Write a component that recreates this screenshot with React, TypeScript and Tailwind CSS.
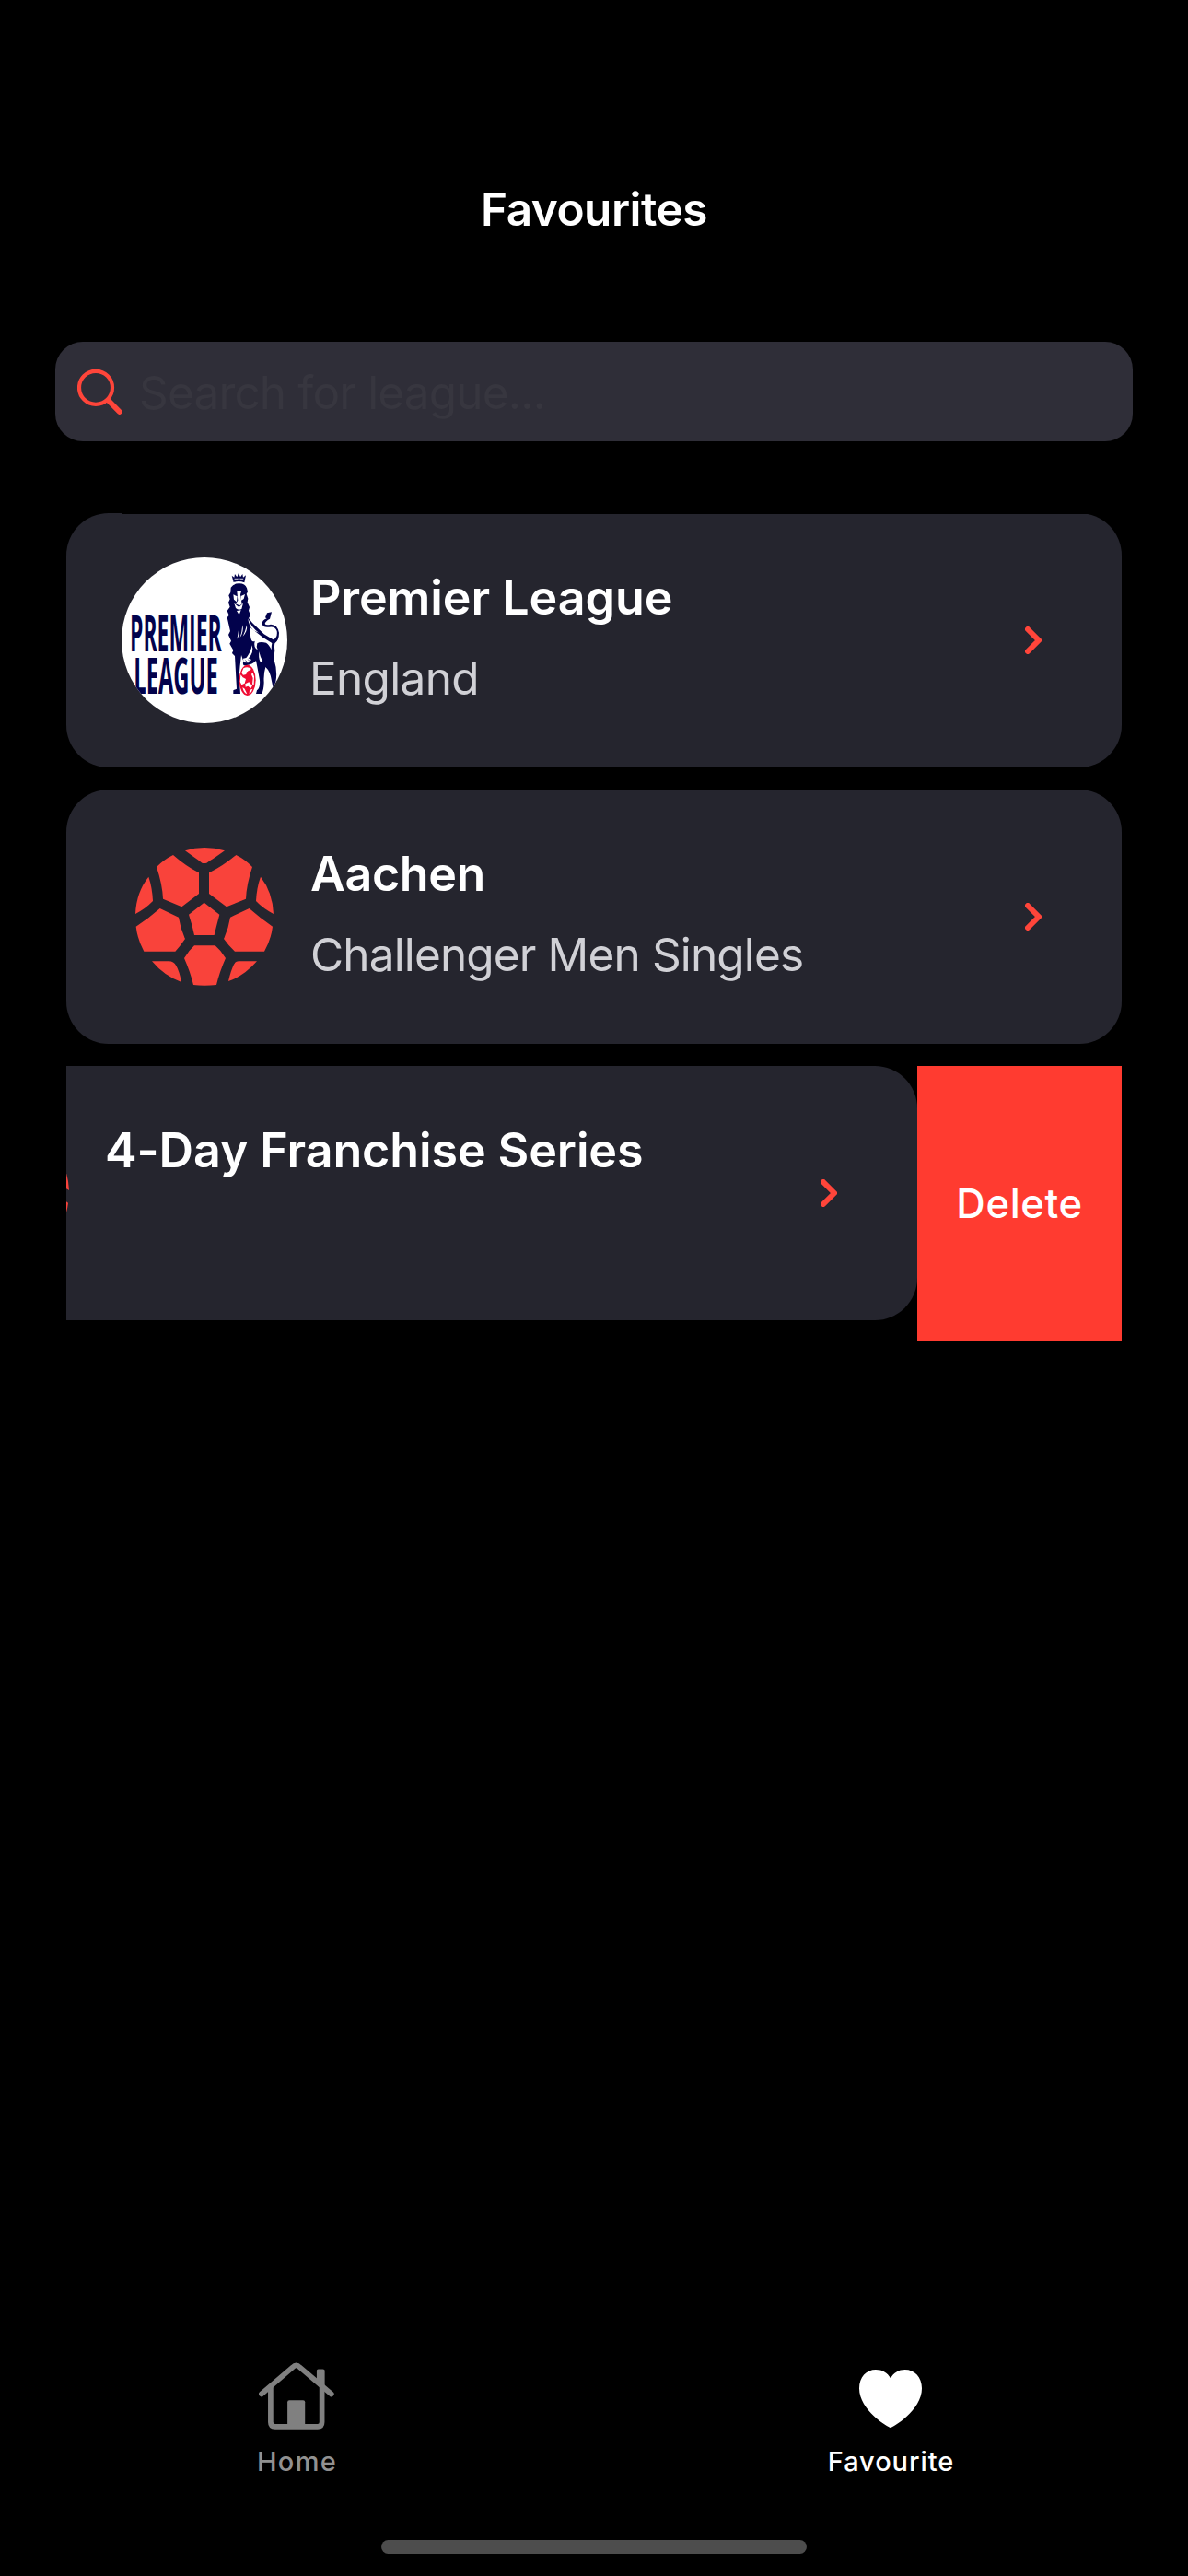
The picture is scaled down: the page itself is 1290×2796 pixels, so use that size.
import type { ReactNode } from "react";

function SearchIcon() {
  return (
    <svg viewBox="84 400 50 50" className="h-[50px] w-[50px] shrink-0" fill="none" stroke="#ff453a">
      <circle cx="104" cy="420.8" r="18" strokeWidth="4.2" />
      <path d="M117.5 434.5 L129.8 447" strokeWidth="5.8" strokeLinecap="round" />
    </svg>
  );
}

function Chevron() {
  return (
    <svg viewBox="159 120 54 90" className="h-[30px] w-[18px] shrink-0" fill="none" stroke="#ff453a">
      <path d="M168 129 L204 165 L168 201" strokeWidth="18" strokeLinecap="round" strokeLinejoin="round" />
    </svg>
  );
}

function BallIcon() {
  return (
    <svg viewBox="51 60 450 450" className="h-[150px] w-[150px]" fill="#f9433b">
      <path d="M213 70 Q275 50 342 70 L310 92 Q290 104 283 110 Q275 112 268 110 Q260 103 245 93 Z" />
      <path d="M174 84 Q215 120 258 142 V210 L202 253 L141 227 Q139 180 120 123 Q145 98 174 84 Z" />
      <path d="M379 84 Q336 120 291 142 V210 L348 253 L411 227 Q413 180 432 123 Q408 98 379 84 Z" />
      <path d="M94 155 Q106 190 108 234 Q85 258 51 276 Q54 205 94 155 Z" />
      <path d="M459 155 Q446 190 444 234 Q467 258 501 276 Q498 205 459 155 Z" />
      <path d="M275 239 L325 278 Q315 315 308 345 H243 Q237 315 225 278 Z" />
      <path d="M131 258 L192 287 Q198 325 213 357 Q198 380 181 398 H79 Q58 360 53 317 Q95 290 131 258 Z" />
      <path d="M422 258 L360 287 Q354 325 339 357 Q355 380 375 398 H471 Q493 360 498 317 Q458 290 422 258 Z" />
      <path d="M243 379 H311 Q330 395 345 420 Q325 465 315 507 Q275 512 240 507 Q230 465 210 420 Q225 395 243 379 Z" />
      <path d="M105 430 H160 Q176 430 184 445 Q194 462 201 498 Q145 478 105 430 Z" />
      <path d="M447 430 H388 Q378 430 372 440 Q362 460 354 495 Q405 478 447 430 Z" />
    </svg>
  );
}

function PremierLeagueLogo() {
  const navy = "#02024c";
  return (
    <svg viewBox="36 44 540 540" className="h-[180px] w-[180px] rounded-full bg-white">
      <g fill={navy} fontFamily="Open Sans, sans-serif" fontWeight="700" fontSize="159">
        <text x="63" y="351" textLength="299" lengthAdjust="spacingAndGlyphs">PREMIER</text>
        <text x="76" y="487" textLength="274" lengthAdjust="spacingAndGlyphs">LEAGUE</text>
      </g>
      <g fill={navy}>
        {/* crown */}
        <path d="M401 125 L395 103 L403 109 L405 98 L412 108 L417 95 L423 108 L430 98 L432 109 L441 102 L436 126 Q418 119 401 125 Z" />
        {/* head and mane */}
        <path d="M392 142 Q402 128 420 129 Q438 129 444 144 L447 156 L443 163 L448 178 L446 190 L453 206 L450 217 L456 232 L450 242 L462 257 L500 294 L530 312 Q545 305 542 284 Q536 268 517 271 Q497 274 494 260 Q494 248 509 243 L504 240 L510 225 L525 222 L519 244 Q504 252 503 260 Q506 266 522 262 Q545 264 549 289 Q549 314 535 324 Q533 335 535 347 L532 374 Q545 415 538 450 L530 470 L525 447 Q521 415 505 401 Q498 425 500 451 Q499 478 492 488 H474 L477 477 Q488 470 486 444 Q480 410 474 380 Q463 393 441 396 Q428 398 433 382 L426 362 Q421 400 419 430 L423 488 H400 L400 477 L411 472 Q408 420 405 365 L396 356 L400 346 L388 325 L393 316 L384 296 L390 284 L380 240 L386 232 L380 218 L389 205 L384 191 L389 180 L385 168 L391 158 Z" />
      </g>
      <g fill="white">
        {/* face */}
        <path d="M400 165 L413 171 L411 189 L402 181 Z" />
        <path d="M425 170 L438 164 L434 179 L425 185 Z" />
        <path d="M412 155 H426 L423 165 L428 196 L420 201 L408 195 L415 184 Z" />
        <path d="M403 193 L415 204 L421 204 L432 193 L427 212 Q417 218 408 209 Z" />
        <path d="M411 218 L425 216 L419 231 Z" />
        <path d="M403 112 H433 L432 119 L419 114 L405 119 Z" opacity="0.65" />
        {/* mane and flank highlights */}
        <path d="M418 274 Q423 291 412 310 Q416 291 418 274 Z" />
        <path d="M430 264 Q435 286 422 305 Q428 288 430 264 Z" />
        <path d="M444 264 Q447 285 431 301 Q439 285 444 264 Z" />
        <path d="M448 243 Q459 273 483 289 L465 282 Q450 266 448 243 Z" />
        <path d="M456 273 L497 305 L526 323 Q524 332 524 345 Q517 328 507 322 Q487 317 478 324 Q474 335 479 345 Q465 337 470 316 Q453 327 456 273 Z" />
        <path d="M461 330 Q468 354 450 372 L438 376 Q457 355 461 330 Z" />
        <path d="M432 373 L446 370 L459 377 L450 387 L433 386 Z" />
        <path d="M489 387 Q480 370 485 350 Q487 370 496 380 Z" />
      </g>
      <path d="M439 379 L445 384 M448 376 L453 382" stroke={navy} strokeWidth="2" />
      {/* ball */}
      <ellipse cx="446" cy="444" rx="27" ry="50" fill="#ef0b32" />
      <g fill="white">
        <path d="M433 405 Q446 397 459 407 L447 416 L442 425 L432 427 L427 420 Z" />
        <path d="M424 426 L431 435 L441 440 L437 454 L427 459 L422 449 Z" />
        <path d="M463 418 L468 432 L467 458 L462 457 L464 437 L459 425 Z" />
        <path d="M439 456 L451 450 L462 462 L457 471 L448 463 L440 466 Z" />
        <path d="M430 467 L437 472 L445 489 Q434 486 430 467 Z" />
        <path d="M453 476 L463 472 Q460 484 452 489 Z" />
      </g>
      <path d="M443 418 L450 414 L459 421 L459 440 L451 450 L443 436 Z" fill="#ef0b32" />
    </svg>
  );
}

function HomeIcon() {
  return (
    <svg viewBox="93 71 245 218" className="h-[73px] w-[82px]" fill="none" stroke="#808080" strokeLinecap="round">
      <path d="M101.500 174 L203 87 Q214.500 75 226 87 L328.500 174" strokeWidth="17" strokeLinejoin="round" />
      <path d="M131.500 152 V265 Q131.500 279.500 146 279.500 H284 Q298 279.500 298 265 V152" strokeWidth="17" />
      <path d="M281 137 V98 Q281 93 286 93 H301 Q307 93 307 98 V158 Z" fill="#808080" stroke="none" />
      <path d="M186 280 V200 Q186 194 192 194 H237 Q243 194 243 200 V280 Z" fill="#808080" stroke="none" />
    </svg>
  );
}

function HeartIcon() {
  return (
    <svg viewBox="159 96 204 189" className="h-[63px] w-[68px]" fill="white">
      <path d="M261 285 C254 285 159 228 159 157 C159 120 182 96 213 96 C234 96 251 106 261 124 C271 106 288 96 308 96 C339 96 363 120 363 157 C363 228 268 285 261 285 Z" />
    </svg>
  );
}

type LeagueProps = { logo: ReactNode; name: ReactNode; region?: ReactNode };

function LeagueCard({ logo, name, region }: LeagueProps) {
  return (
    <div className="flex h-[276px] w-[1146px] shrink-0 items-center rounded-[46px] bg-[#25252e] pr-[87px] pl-[60px]">
      <div className="flex h-[180px] w-[180px] shrink-0 items-center justify-center">{logo}</div>
      <div className="ml-[25px] flex h-full flex-1 flex-col pt-[62px] whitespace-nowrap">
        <div className="h-[87px] text-[52px] leading-[60px] font-semibold text-white">{name}</div>
        <div className="text-[49.5px] leading-[60px] text-[#d1d1d6]">{region}</div>
      </div>
      <Chevron />
    </div>
  );
}

export default function App() {
  return (
    <div className="flex h-[2796px] w-[1290px] flex-col overflow-hidden bg-black font-['Inter',sans-serif]">
      <header className="mt-[197px] text-center text-[49.5px] leading-[60px] font-semibold tracking-[-0.49px] text-white">
        Favourites
      </header>

      <div className="mx-[60px] mt-[114px] flex h-[108px] shrink-0 items-center rounded-[30px] bg-[#2f2e38] pl-6">
        <SearchIcon />
        <span className="mt-px ml-[17px] text-[49.5px] leading-[60px] tracking-[-0.83px] text-[#37363f]">Search for league...</span>
      </div>

      <main className="mx-[72px] mt-[78px] flex flex-1 flex-col gap-6">
        <div className="relative">
          <LeagueCard
            logo={<PremierLeagueLogo />}
            name={<span className="tracking-[-0.07px]">Premier League</span>}
            region={<span className="-ml-px tracking-[-0.7px]">England</span>}
          />
          <div className="absolute top-0 right-0 left-[60px] h-px bg-black" />
        </div>
        <LeagueCard
          logo={<BallIcon />}
          name={<span className="tracking-[-0.4px]">Aachen</span>}
          region={<span className="tracking-[-0.86px]">Challenger Men Singles</span>}
        />
        <div className="flex h-[299px] justify-end overflow-hidden">
          <LeagueCard logo={<BallIcon />} name={<span className="-ml-px tracking-[-0.12px]">4-Day Franchise Series</span>} />
          <button className="h-[299px] w-[222px] shrink-0 bg-[#ff3b30] text-center text-[43.6px] font-medium tracking-[0.6px] text-white">
            Delete
          </button>
        </div>
      </main>

      <nav className="grid h-[240px] shrink-0 grid-cols-2 text-[29px] leading-[36px] font-medium">
        <div className="flex flex-col items-center text-[#919191]">
          <div className="flex h-[98px] items-start pt-2 pr-0.5">
            <HomeIcon />
          </div>
          <span className="tracking-[1.3px]">Home</span>
        </div>
        <div className="flex flex-col items-center text-white">
          <div className="flex h-[98px] items-start pt-4 pr-0.5">
            <HeartIcon />
          </div>
          <span className="tracking-[0.94px]">Favourite</span>
        </div>
        <div className="col-span-2 mx-auto mt-auto mb-6 h-[15px] w-[462px] rounded-full bg-[#4d4d4d]" />
      </nav>
    </div>
  );
}
